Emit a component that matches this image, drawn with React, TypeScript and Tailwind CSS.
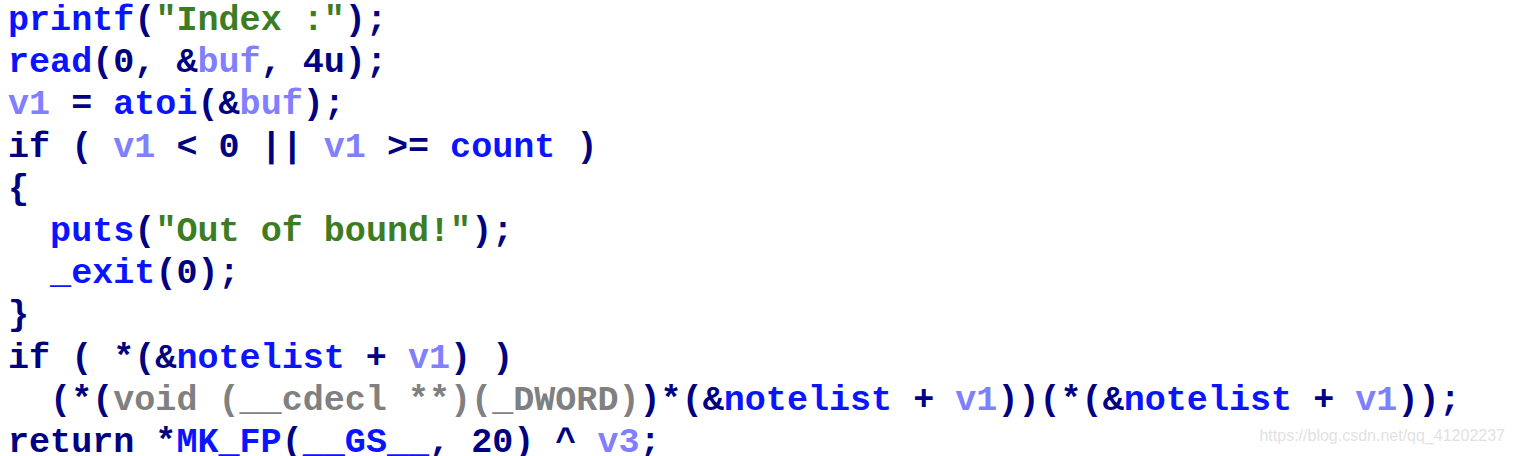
import React from 'react';

type Tok = [string, string];

const K = 'text-[#000080]'; // punctuation / keywords
const F = 'text-[#0a14ff]'; // functions / globals
const S = 'text-[#3c7d23]'; // strings
const V = 'text-[#8080ff]'; // locals
const G = 'text-[#808080]'; // types

const lines: Tok[][] = [
  [[F, 'printf'], [K, '('], [S, '"Index :"'], [K, ');']],
  [[F, 'read'], [K, '(0, &'], [V, 'buf'], [K, ', 4u);']],
  [[V, 'v1'], [K, ' = '], [F, 'atoi'], [K, '(&'], [V, 'buf'], [K, ');']],
  [[K, 'if ( '], [V, 'v1'], [K, ' < 0 || '], [V, 'v1'], [K, ' >= '], [F, 'count'], [K, ' )']],
  [[K, '{']],
  [[K, '  '], [F, 'puts'], [K, '('], [S, '"Out of bound!"'], [K, ');']],
  [[K, '  '], [F, '_exit'], [K, '(0);']],
  [[K, '}']],
  [[K, 'if ( *(&'], [F, 'notelist'], [K, ' + '], [V, 'v1'], [K, ') )']],
  [
    [K, '  (*('],
    [G, 'void (__cdecl **)(_DWORD)'],
    [K, ')*(&'],
    [F, 'notelist'],
    [K, ' + '],
    [V, 'v1'],
    [K, '))(*(&'],
    [F, 'notelist'],
    [K, ' + '],
    [V, 'v1'],
    [K, '));'],
  ],
  [[K, 'return *'], [F, 'MK_FP'], [K, '('], [F, '__GS__'], [K, ', 20) ^ '], [V, 'v3'], [K, ';']],
];

export default function App() {
  return (
    <div className="relative w-[1514px] h-[456px] overflow-hidden bg-white">
      <div className="pl-[8px] pt-[0px] font-['Liberation_Mono',monospace] font-bold text-[35.1px] whitespace-pre">
        {lines.map((line, i) => (
          <div key={i} className="h-[42.2px] leading-[42.2px]">
            {line.map(([c, t], j) => (
              <span key={j} className={c}>
                {t}
              </span>
            ))}
          </div>
        ))}
      </div>
      <div className="absolute right-[9px] bottom-[8px] font-['Liberation_Sans',sans-serif] text-[16px] text-[#e2e2e2]">
        https://blog.csdn.net/qq_41202237
      </div>
    </div>
  );
}
